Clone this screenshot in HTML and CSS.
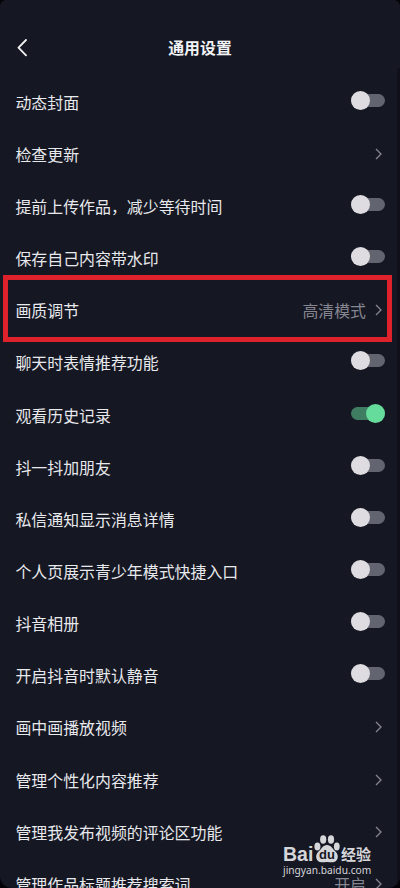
FILE: index.html
```
<!DOCTYPE html>
<html lang="zh-CN">
<head>
<meta charset="utf-8">
<title>通用设置</title>
<link rel="stylesheet" href="styles.css">
</head>
<body>
<main class="screen">
  <header class="bar">
    <svg class="back" viewBox="0 0 10 18"><path d="M9 1 L1.5 8.7 L9 16.4"/></svg>
    <h1>通用设置</h1>
  </header>
  <ul class="list">
    <li><span class="label">动态封面</span><i class="switch"></i></li>
    <li><span class="label">检查更新</span><svg class="more" viewBox="0 0 7 12"><path d="M1 1l5 5-5 5"/></svg></li>
    <li><span class="label">提前上传作品，减少等待时间</span><i class="switch"></i></li>
    <li><span class="label">保存自己内容带水印</span><i class="switch"></i></li>
    <li class="marked"><span class="label">画质调节</span><span class="value">高清模式</span><svg class="more" viewBox="0 0 7 12"><path d="M1 1l5 5-5 5"/></svg></li>
    <li><span class="label">聊天时表情推荐功能</span><i class="switch"></i></li>
    <li><span class="label">观看历史记录</span><i class="switch on"></i></li>
    <li><span class="label">抖一抖加朋友</span><i class="switch"></i></li>
    <li><span class="label">私信通知显示消息详情</span><i class="switch"></i></li>
    <li><span class="label">个人页展示青少年模式快捷入口</span><i class="switch"></i></li>
    <li><span class="label">抖音相册</span><i class="switch"></i></li>
    <li><span class="label">开启抖音时默认静音</span><i class="switch"></i></li>
    <li><span class="label">画中画播放视频</span><svg class="more" viewBox="0 0 7 12"><path d="M1 1l5 5-5 5"/></svg></li>
    <li><span class="label">管理个性化内容推荐</span><svg class="more" viewBox="0 0 7 12"><path d="M1 1l5 5-5 5"/></svg></li>
    <li><span class="label">管理我发布视频的评论区功能</span><svg class="more" viewBox="0 0 7 12"><path d="M1 1l5 5-5 5"/></svg></li>
    <li><span class="label">管理作品标题推荐搜索词</span><span class="value">开启</span><svg class="more" viewBox="0 0 7 12"><path d="M1 1l5 5-5 5"/></svg></li>
  </ul>
  <div class="watermark">
    <div class="brand">
      <span class="bai">Bai</span>
      <span class="paw"><svg viewBox="0 0 26 28"><ellipse cx="3.4" cy="11.500" rx="3" ry="3.900"/><ellipse cx="9.2" cy="4.500" rx="3.100" ry="4.200"/><ellipse cx="17" cy="4.500" rx="3.100" ry="4.200"/><ellipse cx="22.800" cy="11.500" rx="2.900" ry="3.900"/><path d="M13 10c4 0 5.500 3.800 8.500 6.600c4.500 4.500 2 10.700-3 10.700c-2 0-3.500-.4-5.500-.4s-3.500.4-5.500.4c-5 0-7.500-6.200-3-10.700c3-2.800 4.500-6.600 8.500-6.600z"/></svg><b>du</b></span>
      <span class="jy">经验</span>
    </div>
    <div class="url">jingyan.baidu.com</div>
  </div>
</main>
</body>
</html>
```
FILE: styles.css
```
*, *::before, *::after { box-sizing: border-box; }
body { margin: 0; background: #020207; overflow: hidden; }
.screen {
  position: relative;
  width: 400px;
  height: 888px;
  overflow: hidden;
  background: #151723;
  border-radius: 6px 6px 12px 12px;
  font-family: "Noto Sans CJK SC", sans-serif;
  color: #e8e9ec;
}
.screen::after {
  content: "";
  position: absolute;
  right: 0;
  top: 68px;
  bottom: 0;
  width: 3px;
  background: #0f101a;
}
.bar {
  display: grid;
  grid-template-columns: 60px 1fr 60px;
  align-items: center;
  height: 74px;
  padding-top: 21px;
}
.back { width: 10px; height: 18px; margin-left: 17px; }
.back path { fill: none; stroke: #f2f2f4; stroke-width: 1.8; stroke-linecap: round; stroke-linejoin: round; }
h1 { margin: 0; text-align: center; font-size: 15.9px; line-height: 24px; font-weight: 700; color: #f2f3f5; }
.list { list-style: none; margin: 0; padding: 0; }
.list li {
  display: flex;
  align-items: center;
  height: 52.17px;
  padding: 0 15px 0 15.4px;
}
.label { flex: 1; padding-top: 5px; font-size: 15.93px; line-height: 24px; white-space: nowrap; }
.value { padding-top: 5px; margin-right: 9px; font-size: 15.9px; line-height: 24px; color: #858690; }
.more { width: 7px; height: 12px; margin: 3px 3px 0 0; }
.more path { fill: none; stroke: #858690; stroke-width: 1.3; }
.switch { position: relative; width: 34px; height: 13px; border-radius: 7px; background: #62646f; }
.switch::before {
  content: "";
  position: absolute;
  left: 0;
  top: -3px;
  width: 19px;
  height: 19px;
  border-radius: 50%;
  background: #dedce0;
}
.switch.on { background: #3f7d63; }
.switch.on::before { left: 15px; background: #65dc9c; }
.marked { position: relative; }
.marked::after {
  content: "";
  position: absolute;
  left: 3px;
  right: 8px;
  top: -7.500px;
  height: 67px;
  border: 5px solid #de222c;
}
.watermark { position: absolute; left: 283px; top: 835px; width: 90px; color: #d5d6da; }
.brand { display: flex; align-items: flex-end; height: 28px; }
.bai { flex: none; font: 700 19.500px/18px "Liberation Sans", sans-serif; width: 31px; }
.paw { flex: none; position: relative; width: 26px; height: 28px; }
.paw svg { display: block; width: 26px; height: 28px; fill: #d5d6da; }
.paw b { position: absolute; left: 0; right: 0; bottom: 2px; text-align: center; color: #151723; font: 700 13px/13px "Liberation Sans", sans-serif; }
.jy { font-size: 15px; line-height: 18px; font-weight: 700; margin-left: 1px; white-space: nowrap; }
.url { font: 10.200px/14px "Noto Sans", sans-serif; white-space: nowrap; }
```
